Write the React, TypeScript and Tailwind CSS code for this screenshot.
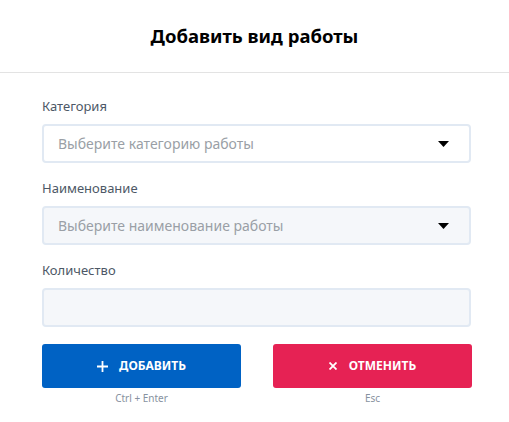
import React from 'react';

function Caret() {
  return (
    <svg width="11" height="6" viewBox="0 0 11 6" className="shrink-0">
      <path d="M0 0 H11 L5.5 6 Z" fill="#000" />
    </svg>
  );
}

function Field({ label, children }: { label: string; children: React.ReactNode }) {
  return (
    <div className="flex flex-col">
      <span className="h-[18px] text-[13px] leading-[18px] text-[#4d5866] mb-[9px]">{label}</span>
      {children}
    </div>
  );
}

export default function App() {
  return (
    <div className="w-[509px] h-[422px] bg-white" style={{ fontFamily: '"Noto Sans", "Open Sans", sans-serif' }}>
      <div className="h-[73px] flex items-center justify-center border-b border-[#e3e3e3]">
        <h1 className="text-[18.5px] font-bold text-black">Добавить вид работы</h1>
      </div>

      <div className="pl-[42px] pr-[38px] pt-[24px] flex flex-col gap-[16px]">
        <Field label="Категория">
          <div className="h-[39px] flex items-center justify-between pl-[14px] pr-[20px] border-2 border-[#e1e9f3] rounded-[4px] bg-white">
            <span className="text-[14px] text-[#9a9fa6]">Выберите категорию работы</span>
            <Caret />
          </div>
        </Field>

        <Field label="Наименование">
          <div className="h-[39px] flex items-center justify-between pl-[14px] pr-[20px] border-2 border-[#e1e9f3] rounded-[4px] bg-[#f5f7fa]">
            <span className="text-[14px] text-[#9a9fa6]">Выберите наименование работы</span>
            <Caret />
          </div>
        </Field>

        <Field label="Количество">
          <div className="h-[39px] border-2 border-[#e1e9f3] rounded-[4px] bg-[#f5f7fa]" />
        </Field>
      </div>

      <div className="pl-[42px] pr-[37px] pt-[17px] grid grid-cols-2 gap-[32px]">
        <div className="flex flex-col items-center">
          <button className="w-full h-[44px] rounded-[3px] bg-[#0062c4] flex items-center justify-center gap-[11px] text-white">
            <svg width="11" height="11" viewBox="0 0 11 11">
              <path d="M5.5 0 V11 M0 5.5 H11" stroke="#fff" strokeWidth="1.8" />
            </svg>
            <span className="text-[12px] font-bold">ДОБАВИТЬ</span>
          </button>
          <span className="mt-[3px] text-[10px] text-[#8792a0]">Ctrl + Enter</span>
        </div>
        <div className="flex flex-col items-center">
          <button className="w-full h-[44px] rounded-[3px] bg-[#e62254] flex items-center justify-center gap-[12px] text-white">
            <svg width="8" height="8" viewBox="0 0 8 8">
              <path d="M0.5 0.5 L7.5 7.5 M7.5 0.5 L0.5 7.5" stroke="#fff" strokeWidth="1.8" />
            </svg>
            <span className="text-[12px] font-bold">ОТМЕНИТЬ</span>
          </button>
          <span className="mt-[3px] text-[10px] text-[#8792a0]">Esc</span>
        </div>
      </div>
    </div>
  );
}
